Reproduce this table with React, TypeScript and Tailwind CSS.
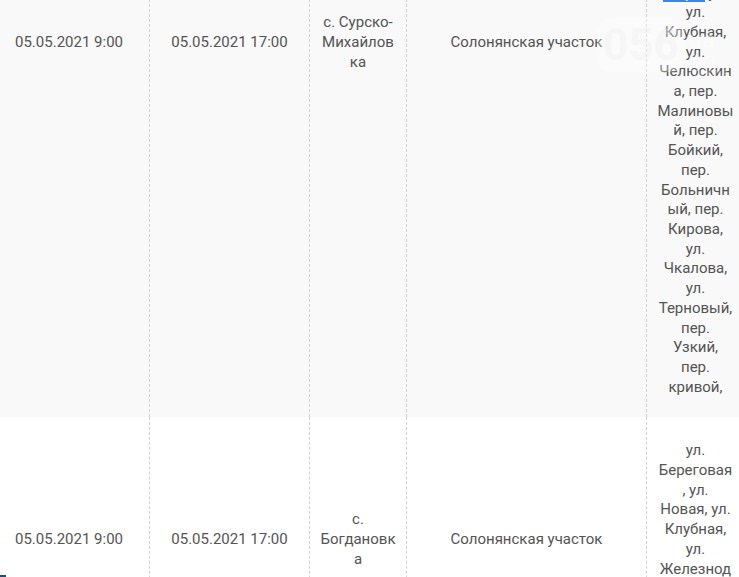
const hiddenTop = [
  "ул.",
  "Садовая,",
  "ул.",
  "Школьная,",
  "ул.",
  "Лесная,",
  "ул.",
  "Полевая,",
  "ул.",
  "Победы,",
  "ул.",
  "Степная,",
  "пер.",
  "Речной,",
  "ул.",
];

const streetsOne = [
  "ул.",
  "Клубная,",
  "ул.",
  "Челюскин",
  "а, пер.",
  "Малиновы",
  "й, пер.",
  "Бойкий,",
  "пер.",
  "Больничн",
  "ый, пер.",
  "Кирова,",
  "ул.",
  "Чкалова,",
  "ул.",
  "Терновый,",
  "пер.",
  "Узкий,",
  "пер.",
  "кривой,",
];

const streetsTwo = [
  "ул.",
  "Береговая",
  ", ул.",
  "Новая, ул.",
  "Клубная,",
  "ул.",
  "Железнод",
  "орожная,",
  "ул.",
  "Мира",
];

const cell =
  "shrink-0 flex items-center justify-center text-center px-[10px] pt-[24px] pb-[20px] break-words";
const divider = "border-l border-dashed border-[#d2d2d2]";

function Lines({ lines }: { lines: string[] }) {
  return (
    <div>
      {lines.map((l, i) => (
        <div key={i} className="whitespace-nowrap">
          {l}
        </div>
      ))}
    </div>
  );
}

function Row({
  start,
  end,
  village,
  area,
  streets,
  bg,
}: {
  start: string;
  end: string;
  village: string;
  area: string;
  streets: React.ReactNode;
  bg: string;
}) {
  return (
    <div className={`flex ${bg}`}>
      <div className={`${cell} w-[160px]`}>{start}</div>
      <div className={`${cell} ${divider} w-[160px]`}>{end}</div>
      <div className={`${cell} ${divider} w-[97px]`}>
        <span className="w-full">{village}</span>
      </div>
      <div className={`${cell} ${divider} w-[240px]`}>{area}</div>
      <div className={`${cell} ${divider} w-[98px]`}>{streets}</div>
    </div>
  );
}

export default function App() {
  return (
    <div className="relative w-[739px] h-[577px] overflow-hidden bg-white font-['Roboto',sans-serif] text-[15px] leading-[19.7px] text-[#545454]">
      <div className="-ml-[11px] -mt-[336px] w-[755px]">
        <Row
          bg="bg-[#f9f9f9]"
          start="05.05.2021 9:00"
          end="05.05.2021 17:00"
          village="с. Сурско-Михайловка"
          area="Солонянская участок"
          streets={
            <div>
              <Lines lines={hiddenTop} />
              <div className="whitespace-nowrap">
                <span className="bg-[#3d86e3] text-white">Мира,</span> ул.
              </div>
              <Lines lines={streetsOne} />
            </div>
          }
        />
        <Row
          bg="bg-white"
          start="05.05.2021 9:00"
          end="05.05.2021 17:00"
          village="с. Богдановка"
          area="Солонянская участок"
          streets={<Lines lines={streetsTwo} />}
        />
      </div>

      {/* faint site watermark */}
      <div className="absolute left-[597px] top-[18px] flex items-start gap-1 opacity-50 pointer-events-none">
        <div className="rounded-[14px] bg-white/60 px-[6px] py-[2px]">
          <span className="text-[44px] leading-[50px] font-bold text-[#f4f4f4]">
            056
          </span>
        </div>
        <div className="pt-[10px] flex flex-col text-white/70">
          <span className="text-[24px] leading-[24px] font-bold">ua</span>
          <span className="text-[12px] leading-[14px]">Сайт города</span>
        </div>
      </div>

      <div className="absolute left-0 bottom-0 h-[2px] w-[6px] bg-[#1e4f7c]" />
    </div>
  );
}
